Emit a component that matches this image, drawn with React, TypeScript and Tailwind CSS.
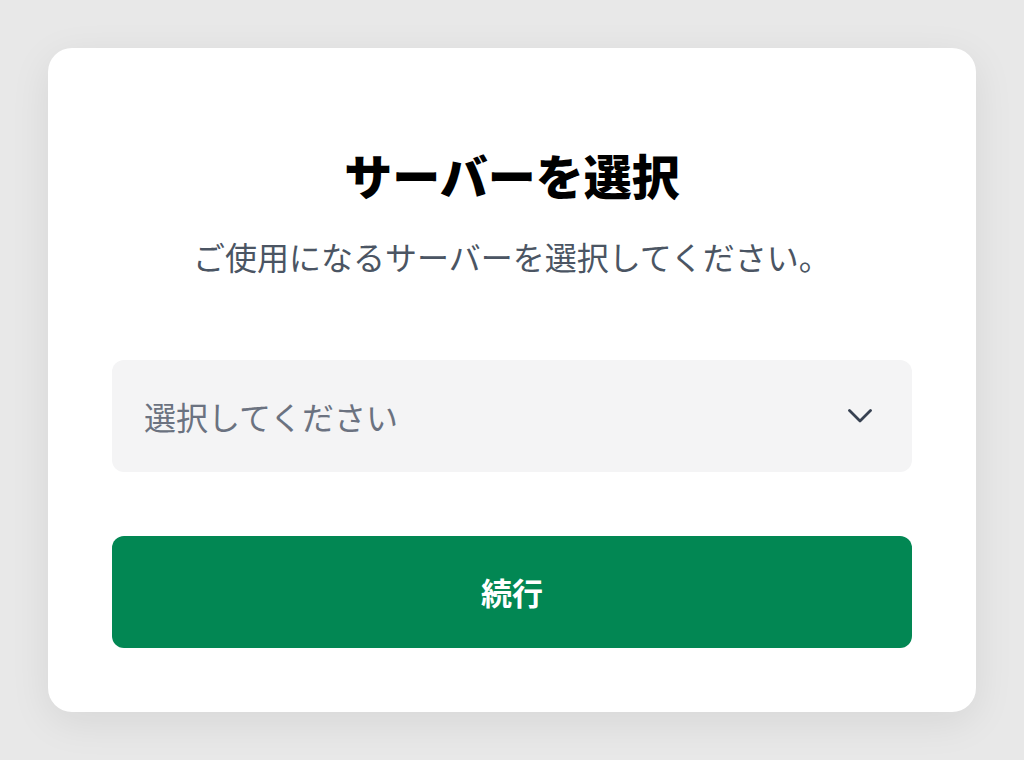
export default function App() {
  return (
    <div
      className="flex h-[760px] w-full items-start justify-center bg-[#e8e8e8] pt-12"
      style={{ fontFamily: '"Noto Sans CJK JP", "Noto Sans", sans-serif' }}
    >
      {/* Card */}
      <div className="flex w-[928px] flex-col rounded-[24px] bg-white px-16 pt-[98px] pb-16 shadow-[0_10px_40px_rgba(0,0,0,0.08)]">
        <h1 className="text-center text-[48px] leading-[56px] font-black text-black">
          サーバーを選択
        </h1>
        <p className="mt-[34px] text-center text-[32px] leading-[40px] text-[#4b5563]">
          ご使用になるサーバーを選択してください。
        </p>

        {/* Select */}
        <button className="mt-[84px] flex h-[112px] w-full items-center justify-between rounded-[12px] bg-[#f4f4f5] pl-8 pr-10 text-left">
          <span className="text-[32px] text-[#6b7280]">選択してください</span>
          <svg width="24" height="14" viewBox="0 0 24 14" fill="none">
            <path
              d="M1.5 1.5 12 12 22.5 1.5"
              stroke="#374151"
              strokeWidth="2.8"
              strokeLinecap="round"
              strokeLinejoin="round"
            />
          </svg>
        </button>

        {/* Continue */}
        <button className="mt-16 flex h-[112px] w-full items-center justify-center rounded-[12px] bg-[#028753] text-[31px] font-bold text-white">
          続行
        </button>
      </div>
    </div>
  );
}
